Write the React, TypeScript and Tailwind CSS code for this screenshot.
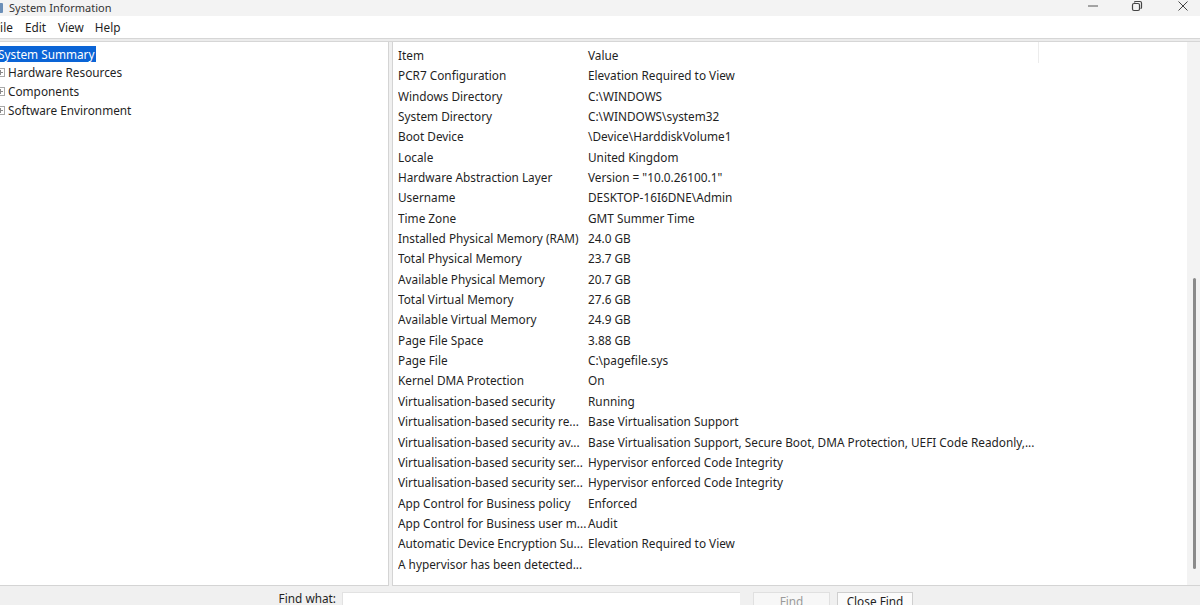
import React from "react";

const rows: [string, string][] = [
  ["PCR7 Configuration", "Elevation Required to View"],
  ["Windows Directory", "C:\\WINDOWS"],
  ["System Directory", "C:\\WINDOWS\\system32"],
  ["Boot Device", "\\Device\\HarddiskVolume1"],
  ["Locale", "United Kingdom"],
  ["Hardware Abstraction Layer", 'Version = "10.0.26100.1"'],
  ["Username", "DESKTOP-16I6DNE\\Admin"],
  ["Time Zone", "GMT Summer Time"],
  ["Installed Physical Memory (RAM)", "24.0 GB"],
  ["Total Physical Memory", "23.7 GB"],
  ["Available Physical Memory", "20.7 GB"],
  ["Total Virtual Memory", "27.6 GB"],
  ["Available Virtual Memory", "24.9 GB"],
  ["Page File Space", "3.88 GB"],
  ["Page File", "C:\\pagefile.sys"],
  ["Kernel DMA Protection", "On"],
  ["Virtualisation-based security", "Running"],
  ["Virtualisation-based security re...", "Base Virtualisation Support"],
  [
    "Virtualisation-based security av...",
    "Base Virtualisation Support, Secure Boot, DMA Protection, UEFI Code Readonly,...",
  ],
  ["Virtualisation-based security ser...", "Hypervisor enforced Code Integrity"],
  ["Virtualisation-based security ser...", "Hypervisor enforced Code Integrity"],
  ["App Control for Business policy", "Enforced"],
  ["App Control for Business user m...", "Audit"],
  ["Automatic Device Encryption Su...", "Elevation Required to View"],
  ["A hypervisor has been detected...", ""],
];

const ExpandBox = () => (
  <span className="ml-[-4px] mr-[3px] inline-flex h-[9px] w-[9px] items-center justify-center border border-[#a8a8a8] bg-white">
    <svg width="5" height="5" viewBox="0 0 5 5">
      <path d="M0 2.5h5M2.5 0v5" stroke="#8a8a8a" strokeWidth="1" />
    </svg>
  </span>
);

export default function App() {
  return (
    <div
      className="flex h-[605px] w-[1200px] flex-col overflow-hidden bg-white text-[11.8px] text-[#1f1f1f]"
      style={{ fontFamily: '"Noto Sans", "Open Sans", sans-serif' }}
    >
      {/* title bar */}
      <div className="flex h-[16px] shrink-0 items-center bg-[#f3f3f3]">
        <span className="ml-[-6px] h-[10px] w-[9px] rounded-[1px] bg-[#6b8fb8]" />
        <span className="ml-[6px] mt-[-2px] text-[11px] leading-none text-[#333]">System Information</span>
        <div className="ml-auto flex items-center">
          <svg width="12" height="12" viewBox="0 0 12 12" className="mr-[32px] mt-[-4px]">
            <path d="M1 6h10" stroke="#555" strokeWidth="1" />
          </svg>
          <svg width="12" height="12" viewBox="0 0 12 12" className="mr-[34px] mt-[-4px]">
            <rect x="1.5" y="3.5" width="7" height="7" rx="1.5" fill="none" stroke="#444" strokeWidth="1.2" />
            <path d="M3.5 2.5 Q3.5 1.5 4.5 1.5 H9 Q10.5 1.5 10.5 3 V7.5 Q10.5 8.5 9.5 8.5" fill="none" stroke="#444" strokeWidth="1.2" />
          </svg>
          <svg width="12" height="12" viewBox="0 0 12 12" className="mr-[11px] mt-[-4px]">
            <path d="M1.5 1.5l9 9M10.5 1.5l-9 9" stroke="#444" strokeWidth="1" />
          </svg>
        </div>
      </div>

      {/* menu bar */}
      <div className="flex h-[22px] shrink-0 items-center bg-white pt-[2px] text-[11.8px]">
        <span className="ml-[-6px]">File</span>
        <span className="ml-[12px]">Edit</span>
        <span className="ml-[12px]">View</span>
        <span className="ml-[11px]">Help</span>
      </div>

      <div className="h-[4px] shrink-0 border-t border-b border-[#d6d6d6] bg-[#ececec]" />

      {/* panes */}
      <div className="flex min-h-0 flex-1 bg-[#f0f0f0]">
        {/* tree */}
        <div className="w-[389px] shrink-0 border-r border-b border-[#d4d4d4] bg-white pt-[2px]">
          <div className="flex h-[19px] items-center">
            <span className="ml-[-3px] bg-[#0a64d6] px-[1px] leading-[16px] text-white">System Summary</span>
          </div>
          {["Hardware Resources", "Components", "Software Environment"].map((t) => (
            <div key={t} className="flex h-[19px] items-center">
              <ExpandBox />
              <span>{t}</span>
            </div>
          ))}
        </div>

        {/* list */}
        <div className="ml-[3px] flex min-w-0 flex-1 border-l border-b border-[#d4d4d4] bg-white">
          <div className="min-w-0 flex-1 pl-[5px] pt-[3px]">
            <div className="relative flex h-[21px] items-center">
              <span className="w-[190px] shrink-0">Item</span>
              <span>Value</span>
              <span className="absolute left-[640px] top-[-3px] h-[21px] w-px bg-[#ececec]" />
            </div>
            {rows.map(([item, value], i) => (
              <div key={i} className="flex h-[20.35px] items-center whitespace-nowrap">
                <span className="w-[190px] shrink-0 overflow-hidden">{item}</span>
                <span>{value}</span>
              </div>
            ))}
          </div>
          {/* scrollbar */}
          <div className="flex w-[13px] shrink-0 flex-col bg-[#f3f3f3] pl-[6px] pt-[236px]">
            <div className="h-[291px] w-[3px] rounded-full bg-[#8b8b8b]" />
          </div>
        </div>
      </div>

      {/* find bar */}
      <div className="flex h-[19px] shrink-0 items-end bg-[#f0f0f0] text-[11.8px]">
        <span className="ml-[276px] mb-[-3px] w-[60px] text-right">Find what:</span>
        <div className="ml-[6px] h-[13px] w-[398px] border-t border-l border-[#e2e2e2] bg-white" />
        <div className="ml-[13px] flex h-[13px] w-[77px] items-start justify-center border-t border-x border-[#e0e0e0] bg-[#f7f7f7] text-[#9a9a9a]">
          <span>Find</span>
        </div>
        <div className="ml-[7px] flex h-[13px] w-[76px] items-start justify-center border-t border-x border-[#cfcfcf] bg-[#fbfbfb]">
          <span>Close Find</span>
        </div>
      </div>
    </div>
  );
}
